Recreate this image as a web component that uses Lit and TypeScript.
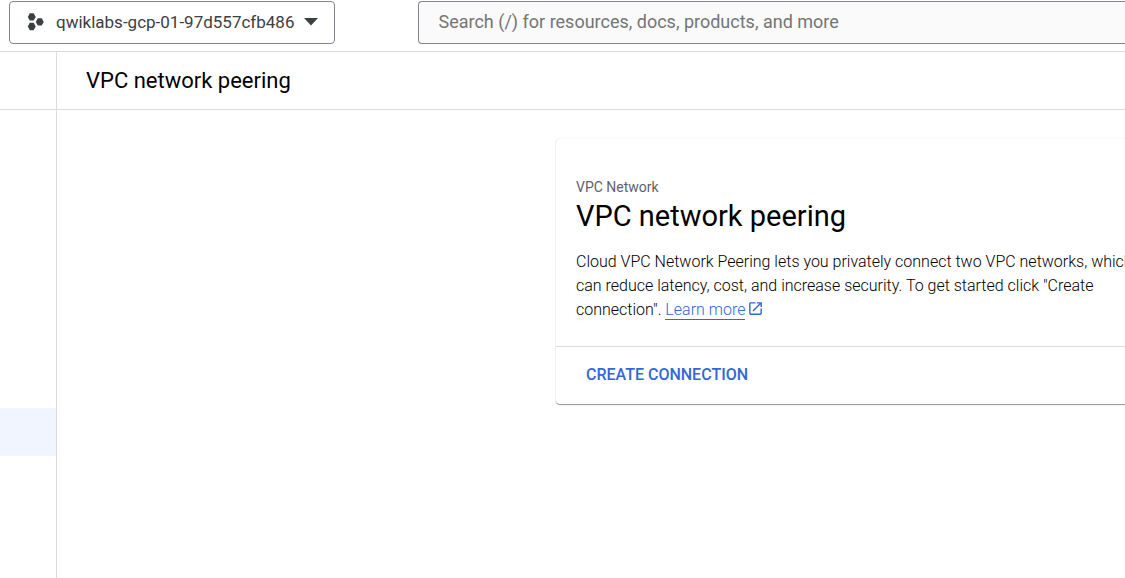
import { LitElement, html, css } from "lit";
import { customElement } from "lit/decorators.js";

@customElement("app-root")
export class AppRoot extends LitElement {
  static styles = css`
    :host {
      display: flex;
      flex-direction: column;
      min-height: 100vh;
      overflow: hidden;
      background: #fff;
      color: #000;
      font-family: Roboto, "Liberation Sans", sans-serif;
    }
    * {
      box-sizing: border-box;
    }
    .topbar {
      display: flex;
      gap: 83px;
      padding: 1px 0 7px 9px;
      border-bottom: 1px solid #dadce0;
    }
    .project {
      display: flex;
      flex: none;
      align-items: center;
      gap: 10px;
      height: 43px;
      padding: 0 16px 2px 17px;
      border: 1px solid #80868b;
      border-radius: 4px;
      background: #fff;
      color: #3c4043;
      font: 400 17px/24px Roboto, "Liberation Sans", sans-serif;
    }
    .project svg {
      display: block;
      flex: none;
      fill: currentColor;
    }
    .search {
      flex: 1;
      min-width: 0;
      height: 43px;
      padding: 0 19px 2px;
      border: 1px solid #80868b;
      border-right: 0;
      border-radius: 4px 0 0 4px;
      background: #fafafa;
      color: #202124;
      font: 400 18px/24px Roboto, "Liberation Sans", sans-serif;
    }
    .search::placeholder {
      color: #757575;
      opacity: 1;
    }
    .body {
      display: flex;
      flex: 1;
    }
    .rail {
      flex: none;
      width: 57px;
      border-right: 1px solid #dadce0;
    }
    .rail-head {
      height: 58px;
      border-bottom: 1px solid #dadce0;
    }
    .rail-items {
      padding-top: 298px;
    }
    .rail-link {
      display: block;
      height: 48px;
      background: #f0f5ff;
    }
    .main {
      flex: 1;
      min-width: 0;
    }
    .title {
      height: 58px;
      margin: 0;
      padding: 0 29px;
      border-bottom: 1px solid #dadce0;
      font-size: 22px;
      font-weight: 400;
      line-height: 57px;
    }
    .content {
      display: grid;
      grid-template-columns: minmax(620px, 1fr);
      padding: 29px 0 29px 499px;
    }
    .card {
      border-radius: 4px;
      box-shadow: 0 1px 1px rgba(0, 0, 0, 0.4), 0 0 2px rgba(0, 0, 0, 0.1);
    }
    .card-body {
      padding: 36px 20px 24px;
    }
    .eyebrow {
      margin: 0;
      color: #5f6368;
      font-size: 14px;
      line-height: 24px;
    }
    .card-title {
      margin: 0 0 17px;
      font-size: 29px;
      font-weight: 400;
      line-height: 34px;
    }
    .text {
      max-width: 570px;
      margin: 0;
      font-size: 16px;
      font-weight: 300;
      line-height: 24px;
    }
    .learn {
      color: #3367d6;
      text-decoration: none;
    }
    .learn-label {
      border-bottom: 1px solid #3367d6;
    }
    .external {
      margin-left: 2px;
      fill: currentColor;
      vertical-align: -2px;
    }
    .actions {
      padding: 10px 20px 11px;
      border-top: 1px solid #dadce0;
    }
    .create {
      display: block;
      height: 36px;
      padding: 0 10px;
      border: 0;
      background: none;
      color: #3367d6;
      font: 500 16px/36px Roboto, "Liberation Sans", sans-serif;
      text-transform: uppercase;
    }
  `;

  render() {
    return html`
      <header class="topbar">
        <button class="project" type="button" aria-haspopup="dialog">
          <svg width="19" height="18" viewBox="0 0 19 18" aria-hidden="true">
            <path d="M2.8.2h3.9l2 3.7-2 3.7H2.8l-2-3.7zM2.8 9.8h3.9l2 3.7-2 3.7H2.8l-2-3.7zM10.8 5.2h3.9l2.1 3.7-2.1 3.7h-3.9L8.8 8.9z" />
          </svg>
          <span>qwiklabs-gcp-01-97d557cfb486</span>
          <svg width="14" height="8" viewBox="0 0 14 8" aria-hidden="true"><path d="M0 0h14L7 7.5z" /></svg>
        </button>
        <input
          class="search"
          type="search"
          aria-label="Search"
          placeholder="Search (/) for resources, docs, products, and more"
        />
      </header>
      <div class="body">
        <nav class="rail" aria-label="VPC network">
          <div class="rail-head"></div>
          <div class="rail-items">
            <a class="rail-link" href="#peering" aria-label="VPC network peering" aria-current="page"></a>
          </div>
        </nav>
        <main class="main">
          <h1 class="title">VPC network peering</h1>
          <div class="content">
            <section class="card">
              <div class="card-body">
                <p class="eyebrow">VPC Network</p>
                <h2 class="card-title">VPC network peering</h2>
                <p class="text">
                  Cloud VPC Network Peering lets you privately connect two VPC networks, which can reduce latency,
                  cost, and increase security. To get started click "Create connection".
                  <a class="learn" href="#learn"
                    ><span class="learn-label">Learn more</span
                    ><svg class="external" width="17" height="17" viewBox="0 0 24 24" aria-hidden="true">
                      <path
                        d="M19 19H5V5h7V3H5a2 2 0 0 0-2 2v14a2 2 0 0 0 2 2h14c1.1 0 2-.9 2-2v-7h-2v7zM14 3v2h3.59l-9.83 9.83 1.41 1.41L19 6.41V10h2V3h-7z"
                      /></svg
                  ></a>
                </p>
              </div>
              <div class="actions">
                <button class="create" type="button">Create connection</button>
              </div>
            </section>
          </div>
        </main>
      </div>
    `;
  }
}
